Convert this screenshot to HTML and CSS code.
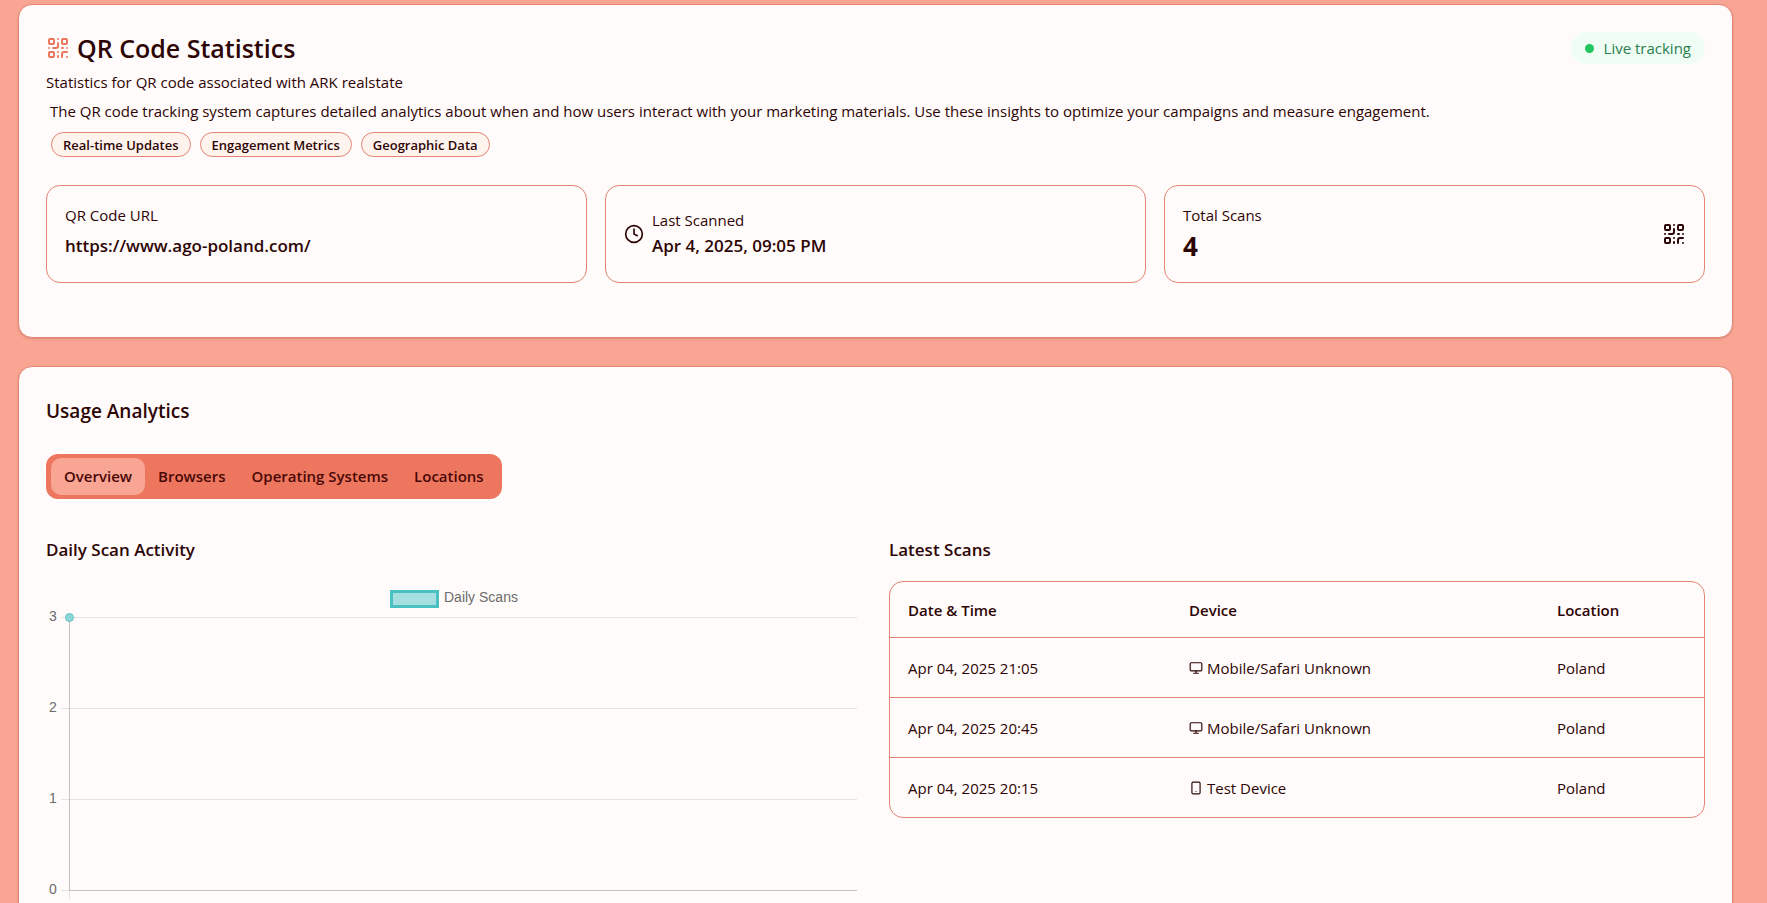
FILE: index.html
```html
<!DOCTYPE html>
<html lang="en">
<head>
<meta charset="utf-8">
<meta name="viewport" content="width=device-width, initial-scale=1">
<title>QR Code Statistics</title>
<link rel="stylesheet" href="styles.css">
</head>
<body>
<svg class="sprite" aria-hidden="true">
  <symbol id="qr" viewBox="0 0 24 24">
    <rect width="5" height="5" x="3" y="3" rx="1"/><rect width="5" height="5" x="16" y="3" rx="1"/><rect width="5" height="5" x="3" y="16" rx="1"/>
    <path d="M21 16h-3a2 2 0 0 0-2 2v3M21 21v.01M12 7v3a2 2 0 0 1-2 2H7M3 12h.01M12 3h.01M12 16v.01M16 12h1M21 12v.01M12 21v-1"/>
  </symbol>
  <symbol id="clock" viewBox="0 0 24 24"><circle cx="12" cy="12" r="10"/><path d="M12 6v6l4 2"/></symbol>
  <symbol id="monitor" viewBox="0 0 24 24"><rect width="20" height="14" x="2" y="3" rx="2"/><path d="M8 21h8M12 17v4"/></symbol>
  <symbol id="phone" viewBox="0 0 24 24"><rect width="14" height="20" x="5" y="2" rx="2"/><path d="M12 18h.01"/></symbol>
</svg>
<main class="page">
  <section class="card summary">
    <header class="summary-head">
      <div>
        <h1 class="title"><svg class="icon icon-qr accent"><use href="#qr"/></svg>QR Code Statistics</h1>
        <p class="subtitle">Statistics for QR code associated with ARK realstate</p>
      </div>
      <span class="live"><span class="dot"></span>Live tracking</span>
    </header>
    <div class="about">
      <p>The QR code tracking system captures detailed analytics about when and how users interact with your marketing materials. Use these insights to optimize your campaigns and measure engagement.</p>
      <ul class="badges">
        <li class="badge">Real-time Updates</li>
        <li class="badge">Engagement Metrics</li>
        <li class="badge">Geographic Data</li>
      </ul>
    </div>
    <div class="stats">
      <div class="stat">
        <div class="stat-text spaced">
          <span>QR Code URL</span>
          <strong class="value">https://www.ago-poland.com/</strong>
        </div>
      </div>
      <div class="stat">
        <svg class="icon icon-clock"><use href="#clock"/></svg>
        <div class="stat-text">
          <span>Last Scanned</span>
          <strong class="value">Apr 4, 2025, 09:05 PM</strong>
        </div>
      </div>
      <div class="stat between">
        <div class="stat-text spaced">
          <span>Total Scans</span>
          <strong class="value count">4</strong>
        </div>
        <svg class="icon icon-qr"><use href="#qr"/></svg>
      </div>
    </div>
  </section>

  <section class="card usage">
    <h2 class="section-title">Usage Analytics</h2>
    <div class="tabs" role="tablist">
      <button class="tab active" role="tab" aria-selected="true">Overview</button>
      <button class="tab" role="tab" aria-selected="false">Browsers</button>
      <button class="tab" role="tab" aria-selected="false">Operating Systems</button>
      <button class="tab" role="tab" aria-selected="false">Locations</button>
    </div>
    <div class="panels">
      <div class="panel">
        <h3 class="panel-title">Daily Scan Activity</h3>
        <svg class="chart" viewBox="0 0 816 408" role="img" aria-label="Daily scans">
          <rect class="legend-box" x="345.500" y="10.500" width="46" height="15"/>
          <text class="chart-text" x="398" y="21">Daily Scans</text>
          <path class="grid-line" d="M15 36.500H811M15 127.500H811M15 218.500H811M15 309.500H24"/>
          <path class="axis-line" d="M24 309.500H811M23.500 36V310"/>
          <path class="grid-line" d="M23.500 310V319"/>
          <text class="chart-text" x="3" y="40">3</text>
          <text class="chart-text" x="3" y="131">2</text>
          <text class="chart-text" x="3" y="222">1</text>
          <text class="chart-text" x="3" y="313">0</text>
          <circle class="point" cx="23.500" cy="36.500" r="4"/>
        </svg>
      </div>
      <div class="panel">
        <h3 class="panel-title">Latest Scans</h3>
        <div class="table-box">
          <table class="scans">
            <thead>
              <tr><th class="col-date">Date &amp; Time</th><th class="col-device">Device</th><th>Location</th></tr>
            </thead>
            <tbody>
              <tr><td>Apr 04, 2025 21:05</td><td><span class="device"><svg class="icon icon-device"><use href="#monitor"/></svg>Mobile/Safari Unknown</span></td><td>Poland</td></tr>
              <tr><td>Apr 04, 2025 20:45</td><td><span class="device"><svg class="icon icon-device"><use href="#monitor"/></svg>Mobile/Safari Unknown</span></td><td>Poland</td></tr>
              <tr><td>Apr 04, 2025 20:15</td><td><span class="device"><svg class="icon icon-device"><use href="#phone"/></svg>Test Device</span></td><td>Poland</td></tr>
            </tbody>
          </table>
        </div>
      </div>
    </div>
  </section>
</main>
</body>
</html>
```
FILE: styles.css
```css
:root {
  --coral: #f8a593;
  --coral-strong: #ed775e;
  --line: #e38474;
  --surface: #fffbfa;
  --ink: #2e0505;
}

* { box-sizing: border-box; }

body {
  margin: 0;
  background: var(--coral);
  color: var(--ink);
  font: 15px/24px "Open Sans", "Noto Sans", sans-serif;
}

h1, h2, h3, p, ul { margin: 0; padding: 0; }

.sprite { position: absolute; width: 0; height: 0; }

.page {
  height: 100vh;
  overflow: hidden;
  padding: 4px 34px 0 18px;
}

.card {
  background: var(--surface);
  border: 1px solid var(--line);
  border-radius: 14px;
  padding: 27px;
  box-shadow: 0 1px 2px rgba(80, 10, 0, 0.16);
}

.summary { padding-bottom: 54px; }
.usage { margin-top: 28px; }

.icon {
  flex: none;
  fill: none;
  stroke: currentColor;
  stroke-width: 2;
  stroke-linecap: round;
  stroke-linejoin: round;
}
.icon-qr { width: 24px; height: 24px; }
.icon-clock { width: 20px; height: 20px; }
.icon-device { width: 14px; height: 14px; }
.accent { color: var(--coral-strong); }

.summary-head {
  display: flex;
  justify-content: space-between;
  align-items: flex-start;
}

.title {
  display: flex;
  align-items: center;
  gap: 7px;
  font-size: 25px;
  font-weight: 600;
  line-height: 32px;
}

.subtitle { margin-top: 6px; }

.live {
  display: flex;
  align-items: center;
  gap: 10px;
  padding: 4px 14px;
  border-radius: 16px;
  background: #f0fdf4;
  color: #2a7f50;
}

.dot {
  width: 9px;
  height: 9px;
  border-radius: 50%;
  background: #22c55e;
}

.about { padding: 5px 4px 0; }

.badges {
  display: flex;
  gap: 9px;
  margin-top: 9px;
  padding-left: 1px;
  list-style: none;
}

.badge {
  padding: 1px 11px 0;
  border: 1px solid var(--line);
  border-radius: 13px;
  background: #fff3ee;
  font-size: 13px;
  font-weight: 600;
  line-height: 22px;
}

.stats {
  display: grid;
  grid-template-columns: repeat(3, 1fr);
  gap: 18px;
  margin-top: 28px;
}

.stat {
  display: flex;
  align-items: center;
  gap: 8px;
  min-height: 98px;
  padding: 16px 18px;
  border: 1px solid var(--line);
  border-radius: 14px;
}
.between { justify-content: space-between; }

.stat-text { display: grid; }
.spaced { gap: 3px; padding-bottom: 3px; }

.value {
  font-size: 17px;
  font-weight: 600;
  line-height: 28px;
}
.spaced .value { line-height: 32px; }
.spaced .count { font-size: 26px; font-weight: 700; }

.section-title { font-size: 19px; font-weight: 600; line-height: 34px; }

.tabs {
  display: inline-flex;
  margin-top: 26px;
  padding: 4px 5px;
  border-radius: 12px;
  background: var(--coral-strong);
  vertical-align: top;
}

.tab {
  padding: 0 13px;
  border: 0;
  border-radius: 10px;
  background: none;
  color: #4a0707;
  font: 600 15px/37px "Open Sans", "Noto Sans", sans-serif;
}
.tab.active { background: var(--coral); }

.panels {
  display: grid;
  grid-template-columns: 1fr 1fr;
  gap: 27px;
  margin-top: 37px;
}

.panel-title {
  margin-bottom: 17px;
  font-size: 17px;
  font-weight: 600;
  line-height: 28px;
}

.chart { display: block; width: 100%; }
.chart-text { fill: #6c6c6c; font: 14px "Liberation Sans", Arial, sans-serif; }
.legend-box { fill: #a5dfdf; stroke: #4bc0c0; stroke-width: 3; }
.grid-line { fill: none; stroke: #e6e2e1; }
.axis-line { fill: none; stroke: #c4c0c0; }
.point { fill: #8fd6d6; stroke: #63c5c5; }

.table-box {
  overflow: hidden;
  border: 1px solid var(--line);
  border-radius: 14px;
}

.scans {
  width: 100%;
  border-collapse: collapse;
  table-layout: fixed;
}
.scans th, .scans td {
  padding: 18px 18px 17px;
  text-align: left;
}
.scans th { padding: 16px 18px 15px; font-weight: 600; }
.scans tr { border-bottom: 1px solid var(--line); }
.scans tbody tr:last-child { border-bottom: 0; }
.scans .col-date { width: 281px; }
.scans .col-device { width: 368px; }

.device { display: flex; align-items: center; gap: 4px; }
```
